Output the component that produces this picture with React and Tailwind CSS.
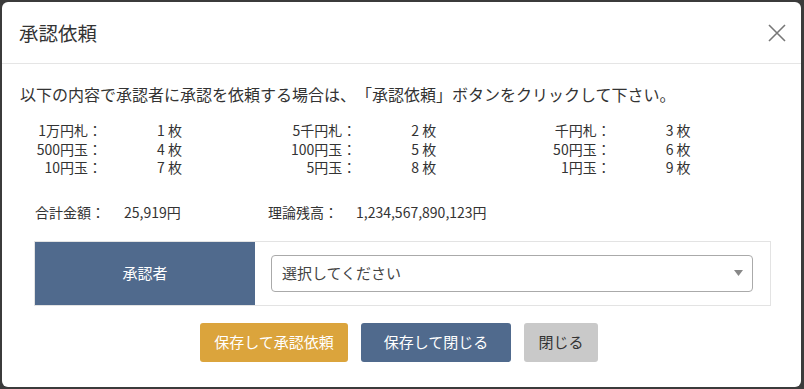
const FONT = { fontFamily: '"Noto Sans CJK JP", "Noto Sans", sans-serif' };

const coins = [
  [
    ["1万円札：", 1],
    ["5千円札：", 2],
    ["千円札：", 3],
  ],
  [
    ["500円玉：", 4],
    ["100円玉：", 5],
    ["50円玉：", 6],
  ],
  [
    ["10円玉：", 7],
    ["5円玉：", 8],
    ["1円玉：", 9],
  ],
];

export default function App() {
  return (
    <div
      className="w-[804px] h-[389px] bg-[#3b3b3b] pt-[2px] pl-[2px] overflow-hidden [text-spacing-trim:space-all]"
      style={FONT}
    >
      <div className="w-[799px] h-[385px] bg-white rounded-[6px] text-[#333]">
        {/* ヘッダー */}
        <div className="h-[62px] border-b border-[#e5e5e5] flex items-center justify-between pl-[17px] pr-[14px]">
          <h1 className="text-[19.5px] font-normal leading-none">承認依頼</h1>
          <svg width="20" height="20" viewBox="0 0 20 20" className="mt-[1px]">
            <path d="M2 2 L18 18 M18 2 L2 18" stroke="#777" strokeWidth="1.6" fill="none" />
          </svg>
        </div>

        {/* 本文 */}
        <div className="px-[18px] pt-[20px]">
          <p className="text-[16px] leading-[20px]">
            以下の内容で承認者に承認を依頼する場合は、「承認依頼」ボタンをクリックして下さい。
          </p>

          <div className="mt-[17px] text-[14px] leading-[18.5px]">
            {coins.map((row, i) => (
              <div key={i} className="flex">
                {row.map(([label, count]) => (
                  <div key={label} className="w-[260px] flex">
                    <div className="w-[82px] text-right">{label}</div>
                    <div className="pl-[55px]">{count} 枚</div>
                  </div>
                ))}
              </div>
            ))}
          </div>

          <div className="mt-[25px] flex text-[14px] leading-[20px] pl-[15px]">
            <div className="w-[89px]">合計金額：</div>
            <div className="w-[144px]">25,919円</div>
            <div className="w-[88px]">理論残高：</div>
            <div>1,234,567,890,123円</div>
          </div>

          {/* 承認者 */}
          <div className="mt-[19px] ml-[14px] w-[737px] h-[65px] border border-[#e3e3e3] flex">
            <div className="w-[220px] bg-[#506a8d] text-white text-[15px] flex items-center justify-center">
              承認者
            </div>
            <div className="flex-1 pl-[16px] pr-[17px] flex items-center">
              <div className="w-full h-[37px] border border-[#aaa] rounded-[4px] flex items-center justify-between pl-[10px] pr-[9px]">
                <span className="text-[15px] text-[#444]">選択してください</span>
                <svg width="9" height="6" viewBox="0 0 9 6">
                  <path d="M0 0 L9 0 L4.5 6 Z" fill="#888" />
                </svg>
              </div>
            </div>
          </div>

          {/* ボタン */}
          <div className="mt-[17px] flex justify-center gap-[13px] pr-[5px]">
            <button className="w-[148px] h-[39px] rounded-[3px] bg-[#dba43c] text-white text-[15px]">
              保存して承認依頼
            </button>
            <button className="w-[150px] h-[39px] rounded-[3px] bg-[#506a8d] text-white text-[15px]">
              保存して閉じる
            </button>
            <button className="w-[74px] h-[39px] rounded-[3px] bg-[#c9c9c9] text-[#333] text-[15px]">
              閉じる
            </button>
          </div>
        </div>
      </div>
    </div>
  );
}
